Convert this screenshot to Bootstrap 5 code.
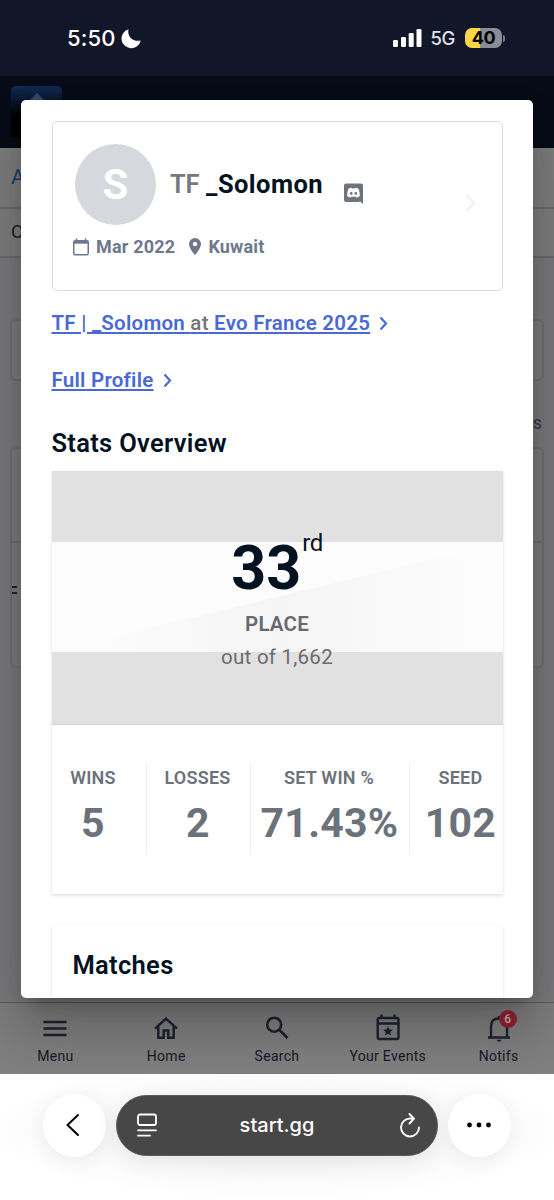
<!DOCTYPE html>
<html lang="en">
<head>
<meta charset="utf-8">
<meta name="viewport" content="width=device-width, initial-scale=1">
<title>start.gg</title>
<link href="https://cdn.jsdelivr.net/npm/bootstrap@5.3.0/dist/css/bootstrap.min.css" rel="stylesheet">
<style>
  body { width: 554px; height: 1200px; overflow: hidden; background: #fff; font-family: Roboto, sans-serif; color: #031221; white-space: nowrap; }
  svg { display: block; flex: none; }
  .ios { font-family: Inter, sans-serif; }
  /* status bar */
  .statusbar { height: 76px; background: #111629; color: #fff; padding-left: 67px; padding-right: 49px; }
  .clock { font-size: 22px; font-weight: 500; line-height: 76px; letter-spacing: .1px; }
  .net { font-size: 18.5px; font-weight: 500; color: #dfe2ea; letter-spacing: -.4px; line-height: 76px; }
  .battery { width: 37px; height: 20px; border-radius: 7px; background: linear-gradient(90deg, #fbd746 15px, #8a8d97 15px); color: #000; font-weight: 700; font-size: 18px; line-height: 20px; letter-spacing: -.5px; }
  .knob { width: 2px; height: 7px; border-radius: 0 2px 2px 0; background: #777b87; margin-left: 1px; }
  /* page below the dialog */
  .site { height: 998px; background: #7b7b7d; }
  .sitehead { height: 72px; background: #080c18; padding: 10px 11px; }
  .logo { width: 51px; height: 52px; border-radius: 5px; background: linear-gradient(#122c55, #000 60%); }
  .crumb { height: 61px; background: #7f7f7f; border-bottom: 2px solid #6b6b6d; padding-left: 11px; font-size: 21px; line-height: 58px; color: #164268; }
  .subnav { height: 49px; background: #7f7f7f; border-bottom: 2px solid #6b6b6d; padding-left: 11px; font-size: 18.5px; line-height: 46px; color: #1b1c20; }
  .ghost { border: 2px solid #707072; border-radius: 6px; background: #7d7d7e; margin: 0 10px; }
  .ghost-a { height: 62px; margin-top: 61px; }
  .ghost-b { height: 221px; }
  .ghost-b > div:first-child { height: 94px; border-bottom: 2px solid #707072; }
  .count { height: 66px; padding-right: 12px; font-size: 18px; line-height: 84px; color: #38393d; }
  .dash { width: 5px; height: 2px; background: #222530; margin-bottom: 4px; }
  .tabs { height: 72px; background: #7f7f7f; border-top: 1px solid #5c5c5e; color: #151a28; font-size: 14px; letter-spacing: .3px; }
  .tabs > div { padding-top: 10px; width: 20%; }
  .tabs span { line-height: 20px; margin-top: 3px; }
  .count6 { width: 18px; height: 18px; left: 15px; top: -3px; border-radius: 50%; background: #922433; color: #cdb3b8; font-size: 12px; font-weight: 500; line-height: 18px; letter-spacing: 0; }
  /* dialog */
  .dialog { left: 21px; top: 24px; width: 512px; height: 898px; border-radius: 5px; background: #fff; padding: 21px 30.500px 0 30.500px;
    box-shadow: 0 14px 19px -9px rgba(0,0,0,.2), 0 31px 49px 4px rgba(0,0,0,.14), 0 12px 59px 10px rgba(0,0,0,.12); }
  .profile { height: 169.500px; border: 1.5px solid #d9dadd; border-radius: 5px; padding: 22px 25px 0 22.500px; }
  .avatar { width: 81px; height: 81px; border-radius: 50%; background: #d5d8dd; color: #fff; font-weight: 700; font-size: 42px; line-height: 81px; }
  .tag { font-size: 25.5px; font-weight: 700; line-height: 30px; margin-left: 14px; margin-top: 24.500px; letter-spacing: .45px; }
  .tag span { color: #737982; font-weight: 600; letter-spacing: -.2px; }
  .meta { color: #6d788d; font-size: 18px; font-weight: 700; line-height: 24px; margin: 9.500px 0 0 -2px; letter-spacing: .2px; }
  .lnk { font-size: 20.5px; font-weight: 600; line-height: 26px; color: #4869d6; letter-spacing: .25px; }
  .lnk a { color: inherit; text-decoration: underline; text-decoration-thickness: 1.5px; text-underline-offset: 2px; }
  .lnk i { font-style: normal; color: #757575; font-weight: 500; }
  .h-sec { font-size: 25.5px; font-weight: 600; line-height: 30px; margin: 0; letter-spacing: .3px; }
  .panel { box-shadow: 0 2px 3px rgba(0,0,0,.1), 0 0 3px rgba(0,0,0,.06); background: #fff; }
  .hero { height: 254px; border-bottom: 1px solid #d3d3d3; background: #e1e1e1; }
  .band { left: 0; right: 0; top: 71px; }
  .rank { font-size: 61px; font-weight: 700; line-height: 60px; padding-top: 67px; }
  .rank sup { font-size: 24px; font-weight: 400; line-height: 24px; align-self: flex-start; top: 0; margin: -7px 0 0 1px; letter-spacing: -.5px; }
  .place { font-size: 20.5px; font-weight: 600; line-height: 24px; color: #65696f; margin-top: 14px; letter-spacing: .2px; }
  .outof { font-size: 20.5px; line-height: 24px; color: #6b6b6f; margin-top: 9px; letter-spacing: .25px; }
  .stats { padding-top: 39px; height: 169px; }
  .stats > div { height: 90px; color: #6b727b; border-right: 1px solid #efeff0; }
  .stats > div:last-child { border: 0; }
  .cap { font-size: 18px; font-weight: 600; line-height: 22px; margin-top: 3px; letter-spacing: .25px; }
  .val { font-size: 41px; font-weight: 700; line-height: 48px; margin-top: 10px; letter-spacing: .25px; }
  .matches { height: 73px; padding: 25px 21px 0; margin-top: 31px; clip-path: inset(-3px -3px 0 -3px); }
  /* browser bar */
  .browser { height: 126px; padding: 19.500px 43px 0 43px; background: radial-gradient(ellipse 300px 70px at 50% 45%, #f1f1f1, #fff); }
  .round { width: 63px; height: 63px; border-radius: 50%; background: #fff; box-shadow: 0 4px 22px rgba(0,0,0,.07); }
  .address { width: 322px; height: 61px; border-radius: 31px; background: #474747; color: #fff; padding: 0 17px 0 20px; font-size: 20px; font-weight: 500; border: 1px solid #5a5a5a; box-shadow: 0 6px 24px rgba(0,0,0,.08); }
</style>
<script src="https://cdn.jsdelivr.net/npm/bootstrap@5.3.0/dist/js/bootstrap.bundle.min.js"></script>
</head>
<body>
<header class="statusbar ios d-flex align-items-center">
  <span class="clock">5:50</span>
  <svg style="margin-left:6px" width="21" height="21" viewBox="0 0 21 21"><path d="M7.500 1.200C6 7.800 11 14.300 19.700 12.600A9.700 9.700 0 1 1 7.500 1.200Z" fill="#fff"/></svg>
  <div class="ms-auto d-flex align-items-center">
    <svg width="29" height="18" viewBox="0 0 29 18" fill="#fff"><rect y="11" width="5" height="7" rx="1.3"/><rect x="8" y="8" width="5" height="10" rx="1.3"/><rect x="15.700" y="4" width="5" height="14" rx="1.3"/><rect x="23.500" width="5" height="18" rx="1.3"/></svg>
    <span class="net" style="margin-left:9px">5G</span>
    <div class="battery text-center" style="margin-left:10px">40</div>
    <div class="knob"></div>
  </div>
</header>

<main class="site position-relative overflow-hidden d-flex flex-column">
  <div class="sitehead"><div class="logo d-flex justify-content-center"><svg width="14" height="14" viewBox="0 0 14 14"><path d="M7 7l7 7H0z" fill="#34486c"/></svg></div></div>
  <div class="crumb">A</div>
  <div class="subnav">O</div>
  <div class="ghost ghost-a"></div>
  <div class="count text-end">s</div>
  <div class="ghost ghost-b"><div></div><div style="padding-top:43px"><div class="dash"></div><div class="dash"></div></div></div>
  <nav class="tabs d-flex mt-auto text-center">
    <div class="d-flex flex-column align-items-center"><svg width="30" height="30" viewBox="0 0 30 30" stroke="#1d2230" stroke-width="2.500"><path d="M3.500 9H26.500M3.500 15.500H26.500M3.500 22H26.500"/></svg><span>Menu</span></div>
    <div class="d-flex flex-column align-items-center"><svg width="30" height="30" viewBox="0 0 30 30" fill="none" stroke="#1d2230" stroke-width="2.500"><path d="M4 15.700L15 5.700L26 15.700M7.300 13.500V24.700H12.700V17.500H17.300V24.700H22.700V13.500"/></svg><span>Home</span></div>
    <div class="d-flex flex-column align-items-center"><svg width="30" height="30" viewBox="0 0 30 30" fill="none" stroke="#1d2230" stroke-width="2.600"><circle cx="12.200" cy="11.700" r="7"/><path d="M17.500 17L25.500 25"/></svg><span>Search</span></div>
    <div class="d-flex flex-column align-items-center"><svg width="30" height="30" viewBox="0 0 30 30" fill="none" stroke="#1d2230" stroke-width="2.400"><rect x="4.700" y="5" width="20.800" height="21" rx="1.700"/><path d="M4.700 10.500H25.500M8.500 1.500V5M21.500 1.500V5"/><path d="M15 13.200l1.400 3.200 3.500.3-2.600 2.400.8 3.400-3.100-1.800-3.100 1.800.8-3.400-2.600-2.400 3.500-.3z" fill="#1d2230" stroke="none"/></svg><span>Your Events</span></div>
    <div class="d-flex flex-column align-items-center"><div class="position-relative"><svg width="30" height="30" viewBox="0 0 30 30" fill="none" stroke="#1d2230" stroke-width="2.400"><path d="M4 24.500H26M7 24V13.500Q7 5.500 15 5.500Q23 5.500 23 13.500V24M15 3V6"/><path d="M12.500 26.700H17.500Q17 28.800 15 28.800T12.500 26.700Z" fill="#1d2230" stroke="none"/></svg><b class="count6 position-absolute">6</b></div><span>Notifs</span></div>
  </nav>

  <section class="dialog position-absolute">
    <div class="profile">
      <div class="d-flex">
        <div class="avatar text-center">S</div>
        <div class="tag"><span>TF</span> _Solomon</div>
        <svg style="margin:39px 0 0 20.500px" width="20" height="22" viewBox="0 0 20 22"><path d="M2 .5H17A2 2 0 0 1 19 2.500V21L15.300 17.800L15.700 19H2A2 2 0 0 1 0 17V2.500A2 2 0 0 1 2 .500Z" fill="#6e747d"/><path d="M4.500 5.800Q6 4.900 7.700 4.800L8.300 5.500H10.700L11.300 4.800Q13 4.900 14.500 5.800Q16.200 9.500 15.800 13Q14.300 14.500 12.200 14.600L11.500 13.600Q9.500 14 7.500 13.600L6.800 14.600Q4.700 14.500 3.200 13Q2.800 9.500 4.500 5.800Z" fill="#fff"/><circle cx="7.200" cy="10.400" r="1.350" fill="#6e747d"/><circle cx="11.800" cy="10.400" r="1.350" fill="#6e747d"/></svg>
        <svg class="ms-auto" style="margin-top:49px" width="16" height="20" viewBox="0 0 16 20" fill="none" stroke="#eff0f7" stroke-width="2"><path d="M5 1.500L13 10L5 18.500"/></svg>
      </div>
      <div class="meta d-flex align-items-center">
        <svg width="16" height="18" viewBox="0 0 16 18" fill="none" stroke="#6d788d" stroke-width="1.500"><rect x=".75" y="2.800" width="14.500" height="14" rx="1.500"/><path d="M.8 4.200H15.200" stroke-width="3"/><path d="M3.500 .5V3M12.500 .5V3"/></svg>
        <span style="margin-left:7px">Mar 2022</span>
        <svg style="margin-left:14px" width="12" height="17" viewBox="0 0 12 17"><path fill-rule="evenodd" d="M6 0A6 6 0 0 1 12 6C12 10.400 6 17 6 17S0 10.400 0 6A6 6 0 0 1 6 0ZM6 3.800A2.200 2.200 0 1 0 6 8.200A2.200 2.200 0 1 0 6 3.800Z" fill="#6d788d"/></svg>
        <span style="margin-left:7px">Kuwait</span>
      </div>
    </div>
    <div class="lnk d-flex align-items-center" style="margin-top:19.500px"><a href="#">TF | _Solomon <i>at</i> Evo France 2025</a><svg style="margin-left:9px" width="10" height="14" viewBox="0 0 10 14" fill="none" stroke="#4869d6" stroke-width="2.200"><path d="M1.500 1.500L7 7.500L1.500 13.500"/></svg></div>
    <div class="lnk d-flex align-items-center" style="margin-top:31px"><a href="#">Full Profile</a><svg style="margin-left:9px" width="10" height="14" viewBox="0 0 10 14" fill="none" stroke="#4869d6" stroke-width="2.200"><path d="M1.500 1.500L7 7.500L1.500 13.500"/></svg></div>
    <h2 class="h-sec" style="margin-top:35px">Stats Overview</h2>
    <div class="panel" style="margin-top:13px">
      <div class="hero position-relative">
        <svg class="band position-absolute" width="451" height="110" viewBox="0 0 451 110">
          <defs><linearGradient id="shine" x1="0" x2="1"><stop offset=".1" stop-color="#fcfcfc"/><stop offset=".5" stop-color="#f5f5f5"/><stop offset=".95" stop-color="#fcfcfc"/></linearGradient></defs>
          <path fill="#fcfcfc" d="M0 0H451V110H0z"/><path fill="url(#shine)" d="M0 110L451 0V110z"/>
        </svg>
        <div class="position-relative text-center">
          <div class="rank d-flex justify-content-center">33<sup>rd</sup></div>
          <div class="place">PLACE</div>
          <div class="outof">out of 1,662</div>
        </div>
      </div>
      <div class="stats d-flex text-center">
        <div style="width:95px"><div class="cap" style="margin-right:11px">WINS</div><div class="val" style="margin-right:11px">5</div></div>
        <div style="width:104px"><div class="cap" style="margin-right:1px">LOSSES</div><div class="val">2</div></div>
        <div style="width:159px"><div class="cap" style="margin-right:1px">SET WIN %</div><div class="val">71.43%</div></div>
        <div style="width:93px"><div class="cap" style="margin-left:9px">SEED</div><div class="val" style="margin-left:9px">102</div></div>
      </div>
    </div>
    <div class="panel matches"><h2 class="h-sec">Matches</h2></div>
  </section>
</main>

<footer class="browser ios d-flex justify-content-between align-items-start">
  <div class="round d-flex align-items-center justify-content-center"><svg style="margin-right:4px" width="16" height="24" viewBox="0 0 16 24" fill="none" stroke="#000" stroke-width="2" stroke-linecap="round" stroke-linejoin="round"><path d="M13 2L2.500 12L13 22"/></svg></div>
  <div class="address d-flex align-items-center justify-content-between" style="margin-top:1px">
    <svg width="20" height="24" viewBox="0 0 20 24" fill="none" stroke="#fff" stroke-width="1.800" stroke-linecap="round"><rect x="1" y="1.500" width="18" height="10.500" rx="2"/><path d="M1 17.300H19M1 22.700H13"/></svg>
    <span style="margin-right:3px">start.gg</span>
    <svg width="20" height="25" viewBox="0 0 20 25" fill="none" stroke="#fff" stroke-width="1.900" stroke-linecap="round" stroke-linejoin="round"><path d="M13.500 5.500H10.500A9 9 0 1 0 19 14.500M9.500 1L14 5.700L9.500 10.500"/></svg>
  </div>
  <div class="round d-flex align-items-center justify-content-center"><svg style="margin-right:2px" width="26" height="6" viewBox="0 0 26 6"><circle cx="3.500" cy="3" r="2.400"/><circle cx="13" cy="3" r="2.400"/><circle cx="22.500" cy="3" r="2.400"/></svg></div>
</footer>
</body>
</html>
